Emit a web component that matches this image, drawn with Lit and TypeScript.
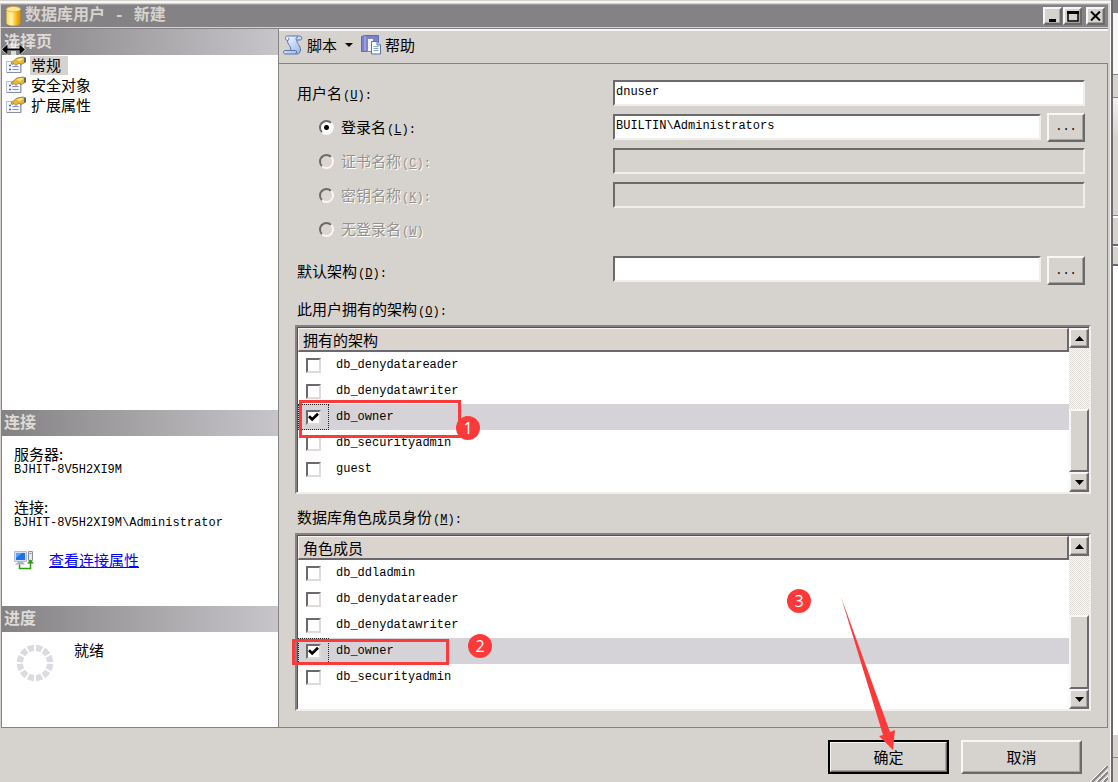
import { LitElement, html, css, svg, nothing } from "lit";
import { customElement, property, state } from "lit/decorators.js";
import { classMap } from "lit/directives/class-map.js";
import { styleMap } from "lit/directives/style-map.js";

const base = css`
  * {
    box-sizing: border-box;
  }
  button,
  input {
    font: inherit;
    color: inherit;
    margin: 0;
    border-radius: 0;
  }
  button {
    padding: 0;
    background: #d6d3ce;
    border: 2px solid;
    border-color: #f7f7f5 #6b696b #6b696b #f7f7f5;
    box-shadow: inset -1px -1px 0 #a5a29f;
  }
  svg {
    display: block;
    flex: none;
  }
`;

interface Row {
  name: string;
  checked?: boolean;
}

@customElement("check-list")
class CheckList extends LitElement {
  @property() heading = "";
  @property({ attribute: false }) rows: Row[] = [];
  @property({ type: Number }) thumb = 50;
  @state() private current = "db_owner";

  static styles = [
    base,
    css`
      :host {
        display: block;
      }
      .frame {
        height: 100%;
        display: flex;
        background: #fff;
        border: 2px solid;
        border-color: #848284 #f0efed #f0efed #848284;
        box-shadow: inset 1px 1px 0 #525052;
        padding: 1px 0 0 1px;
      }
      .area {
        flex: 1;
        min-width: 0;
      }
      table {
        width: 100%;
        border-collapse: separate;
        border-spacing: 0;
        table-layout: fixed;
      }
      .c1 {
        width: 31px;
      }
      th {
        height: 24px;
        padding: 0 4px;
        text-align: left;
        font-size: 15px;
        font-weight: 400;
        line-height: 20px;
        background: #dad3ce;
        border: 1px solid #f7f3ef;
        border-right: 2px solid #6b696b;
        border-bottom: 2px solid #6b696b;
      }
      td {
        height: 26px;
        padding: 0 7px;
        font: 12px/16px "Liberation Mono", "Noto Sans CJK SC", monospace;
      }
      .tick {
        padding: 0 0 0 7px;
        border: 1px solid transparent;
      }
      .current td {
        background: #d6d3d8;
      }
      .current .tick {
        border: 1px dotted #222;
      }
      input {
        appearance: none;
        display: block;
        width: 15px;
        height: 15px;
        background: #fff;
        border: 2px solid;
        border-color: #6b696b #e0dad6 #e0dad6 #6b696b;
      }
      input:checked {
        background: #fff
          url("data:image/svg+xml,%3Csvg xmlns='http://www.w3.org/2000/svg' viewBox='0 0 11 11'%3E%3Cpath d='M1 4.200 4.200 7.400 10 1.800' fill='none' stroke='%23000' stroke-width='2.800'/%3E%3C/svg%3E")
          center / 11px 11px no-repeat;
      }
      .bar {
        width: 20px;
        display: flex;
        flex-direction: column;
        background: repeating-conic-gradient(#dedbd6 0 25%, #fbfbfa 0 50%) 0 0 / 2px 2px;
      }
      .bar button {
        height: 20px;
        display: grid;
        place-items: center;
      }
      .track {
        flex: 1;
        display: flex;
        flex-direction: column;
        justify-content: flex-end;
      }
      .thumb {
        background: #d6d3ce;
        border: 2px solid;
        border-color: #f7f7f5 #6b696b #6b696b #f7f7f5;
      }
    `,
  ];

  render() {
    return html`<div class="frame">
      <div class="area">
        <table>
          <colgroup><col class="c1" /><col /></colgroup>
          <thead>
            <tr><th colspan="2">${this.heading}</th></tr>
          </thead>
          <tbody>
            ${this.rows.map(
              (r, i) => html`<tr
                class=${classMap({ current: r.name === this.current })}
                @click=${() => (this.current = r.name)}
              >
                <td class="tick"><input type="checkbox" id="r${i}" .checked=${!!r.checked} /></td>
                <td><label for="r${i}">${r.name}</label></td>
              </tr>`
            )}
          </tbody>
        </table>
      </div>
      <div class="bar">
        <button aria-label="向上滚动">
          <svg width="9" height="5"><path d="M4.5 0 9 5H0Z" /></svg>
        </button>
        <div class="track"><div class="thumb" style=${styleMap({ height: this.thumb + "%" })}></div></div>
        <button aria-label="向下滚动">
          <svg width="9" height="5"><path d="M0 0H9L4.5 5Z" /></svg>
        </button>
      </div>
    </div>`;
  }
}

const pageIcon = html`<svg width="20" height="18" viewBox="0 0 20 18">
  <path d="M.5 5.5h14v11H.5z" fill="#f4f6ff" stroke="#b8bed0" />
  <path d="M1 16.500h14v-9" fill="none" stroke="#8890a8" />
  <path d="M3 9.500h2M3 13.500h2" stroke="#4a62c8" stroke-width="1.500" />
  <path d="M6.500 10.500h6M6.500 13.500h6" stroke="#8090e0" />
  <path d="m5 7 6-5 6-1 2 1v4.500l-4 2-2.500-1.500L10 9.500 8 7.500 6 8.500Z" fill="#e8b830" stroke="#8c7434" stroke-width=".8" />
  <path d="m10.500 3.500 4.500-1.500 2.500 1-4 2.500Z" fill="#ffe680" />
  <path d="M18 1.500h2v5h-2z" fill="#4d6f72" />
</svg>`;

const scriptIcon = html`<svg width="20" height="20" viewBox="0 0 20 20">
  <defs>
    <linearGradient id="sc" x2="1" y2="1"><stop stop-color="#fff" /><stop offset="1" stop-color="#8fb0ea" /></linearGradient>
  </defs>
  <path
    d="M4 1h12.500c3 0 3 4 .5 4h-3c-1 3 4 6 3.500 10-.3 2.500-1.500 4-3.500 4H2c-2 0-2-3.500 0-3.500h5.500C9 12 4 9 4.500 5.500 2 5.500 2 1 4 1Z"
    fill="url(#sc)" stroke="#5872a8" />
  <path d="M4.500 5.500c2 0 2-2.500.5-2.500M14 5c-1.500 0-1.500-3 1-3M7.500 15.500h5c1.500 0 1.500 3 0 3" fill="none" stroke="#5872a8" />
</svg>`;

const helpIcon = html`<svg width="20" height="20" viewBox="0 0 20 20">
  <path d="m.5 1.500 3-1h14v16H.5Z" fill="#7c80cc" stroke="#6468ac" />
  <path d="M4 1v15" stroke="#b8bce8" />
  <path d="M6.500 3.500h6v13h-6z" fill="#eef2ff" stroke="#7c88bc" />
  <path d="M10.500 6.500h5.500l3.500 3.500v9h-9z" fill="#fff" stroke="#5578a8" />
  <path d="M16 6.500V10h3.500" fill="#c8d8f0" stroke="#5578a8" />
  <path d="M12.500 11.500h5M12.500 13.500h5M12.500 15.500h5" stroke="#88a8d8" />
</svg>`;

const serverIcon = html`<svg width="20" height="20" viewBox="0 0 20 20">
  <path d="M.5 1.500h12v10H.5z" fill="#d8def0" stroke="#b4bcd4" />
  <path d="M2 3h9v7H2z" fill="#1c74e4" />
  <path d="M2 3h6L2 8Z" fill="#58a8fa" />
  <path d="M4 12h5l2 2.500H1Z" fill="#a8b0c0" />
  <path d="M14.500 1.500h4v9h-4z" fill="#e4e8f0" stroke="#8890a0" />
  <path d="M15.500 3.500h2" stroke="#8890a0" />
  <path d="M5.500 14.500v4h11V12" fill="none" stroke="#2c9c10" stroke-width="1.500" />
  <path d="m13 13.500 3.500-4 3.500 4Z" fill="#2c9c10" />
</svg>`;

const spinner = html`<svg width="38" height="38" viewBox="-19 -19 38 38">
  ${Array.from(
    { length: 12 },
    (_, i) => svg`<path d="M-3.700-17.900A18.300 18.300 0 0 1 3.700-17.900L2.300-11.800A12 12 0 0 0-2.300-11.800Z" fill="#dedbe0" transform="rotate(${i * 30 + 15})"/>`
  )}
</svg>`;

@customElement("app-root")
class AppRoot extends LitElement {
  @state() private page = "常规";

  private pages = ["常规", "安全对象", "扩展属性"];
  private schemas: Row[] = [
    { name: "db_denydatareader" },
    { name: "db_denydatawriter" },
    { name: "db_owner", checked: true },
    { name: "db_securityadmin" },
    { name: "guest" },
  ];
  private roles: Row[] = [
    { name: "db_ddladmin" },
    { name: "db_denydatareader" },
    { name: "db_denydatawriter" },
    { name: "db_owner", checked: true },
    { name: "db_securityadmin" },
  ];

  static styles = [
    base,
    css`
      :host {
        display: flex;
        min-height: 100vh;
        overflow: hidden;
        background: #fff;
        color: #000;
        font: 15px/20px "Noto Sans CJK SC", sans-serif;
      }
      .dialog {
        flex: 1;
        min-width: 0;
        display: flex;
        flex-direction: column;
        background: #d6d3ce;
        border-right: 2px solid #6b696b;
        padding: 4px 3px 0 1px;
        box-shadow: inset 0 1px 0 #d6d3ce, inset -1px 3px 0 #f7f7f5;
        position: relative;
      }
      .title {
        height: 23px;
        display: flex;
        align-items: center;
        gap: 2px;
        padding: 0 3px 0 5px;
        background: #848284;
        color: #d6d3ce;
        border-top: 1px solid #a09da0;
      }
      h1 {
        flex: 1;
        margin: 0 0 0 2px;
        font: 700 16px/20px "Liberation Mono", "Noto Sans CJK SC", monospace;
      }
      .title button {
        width: 19px;
        height: 18px;
        display: grid;
        place-items: center;
      }
      .title .close {
        margin-left: 2px;
      }
      .sys {
        display: flex;
        gap: 1px;
      }
      .body {
        flex: 1;
        display: flex;
        margin-top: 1px;
        border-top: 1px solid #848284;
        border-left: 1px solid #848284;
        border-bottom: 1px solid #848284;
      }
      .side {
        width: 276px;
        display: flex;
        flex-direction: column;
        background: #fff;
      }
      h2 {
        height: 26px;
        margin: 0;
        padding: 0 2px;
        font-size: 16px;
        line-height: 22px;
        font-weight: 700;
        color: #dedbd6;
        background: linear-gradient(90deg, #848284, #c8c5ca);
      }
      .pages {
        flex: 1;
        margin: 0;
        padding: 0 4px;
        list-style: none;
      }
      .pages button {
        height: 20px;
        display: flex;
        align-items: center;
        gap: 4px;
        background: none;
        border: 0;
        box-shadow: none;
      }
      .pages span {
        height: 19px;
        line-height: 18px;
        padding: 0 1px;
      }
      .pages .on span {
        background: #d6d3ce;
        padding-right: 7px;
      }
      .conn {
        height: 170px;
        padding: 10px 12px;
        line-height: 16px;
      }
      dl,
      dd {
        margin: 0;
      }
      dd {
        font: 12px/16px "Liberation Mono", "Noto Sans CJK SC", monospace;
        margin-bottom: 21px;
      }
      .conn a {
        display: flex;
        align-items: center;
        gap: 15px;
        height: 16px;
        color: #00f;
      }
      .prog {
        height: 95px;
        display: flex;
        gap: 20px;
        padding: 8px 14px;
      }
      .prog svg {
        margin-top: 4px;
      }
      .main {
        flex: 1;
        min-width: 0;
        display: flex;
        flex-direction: column;
        border-left: 1px solid #848284;
      }
      .tools {
        height: 34px;
        display: flex;
        align-items: center;
        padding: 0 4px 5px;
        border-top: 2px solid #f7f7f5;
      }
      .tools button {
        display: flex;
        align-items: center;
        gap: 4px;
        background: none;
        border: 0;
        box-shadow: none;
      }
      .tools .drop {
        padding: 8px;
      }
      .form {
        flex: 1;
        display: flex;
        flex-direction: column;
        padding: 12px 16px 16px;
        border-top: 1px solid #848284;
        border-right: 1px solid #848284;
      }
      .row {
        height: 34px;
        display: flex;
        align-items: center;
        gap: 6px;
        padding: 0 6px 0 2px;
      }
      .row.schema {
        height: 30px;
        margin-top: 10px;
        align-items: flex-start;
      }
      .schema label {
        align-self: center;
      }
      .cap {
        width: 310px;
        display: flex;
        align-items: center;
        gap: 7px;
      }
      .cap.sub {
        padding-left: 22px;
      }
      .key {
        font-family: "Liberation Mono", monospace;
        font-size: 12px;
        line-height: 16px;
        padding-left: 1px;
      }
      .off label {
        color: #94918e;
        text-shadow: 1px 1px 0 #fff;
      }
      .text {
        flex: 1;
        min-width: 0;
        height: 26px;
        padding: 0 1px 2px;
        font: 12px/16px "Liberation Mono", "Noto Sans CJK SC", monospace;
        background: #fff;
        border: 2px solid;
        border-color: #6b696b #f0efed #f0efed #6b696b;
        outline: none;
      }
      .text:disabled {
        background: #d6d3ce;
      }
      .more {
        width: 38px;
        height: 29px;
        font: 12px/16px "Liberation Mono", monospace;
      }
      .radio {
        appearance: none;
        width: 15px;
        height: 15px;
        border: 2px solid;
        border-color: #6b696b #f7f7f5 #f7f7f5 #6b696b;
        border-radius: 50%;
        background: #fff;
      }
      .radio:checked {
        background: radial-gradient(circle, #000 0 2px, #fff 3px);
      }
      .radio:disabled {
        background: #dcd5d0;
      }
      .group {
        height: 20px;
        margin: 13px 2px 6px;
      }
      .box {
        position: relative;
      }
      .box.schemas {
        height: 169px;
      }
      .box.roles {
        flex: 1;
        min-height: 178px;
      }
      .box check-list {
        height: 100%;
      }
      .foot {
        display: flex;
        justify-content: flex-end;
        gap: 12px;
        padding: 12px 26px 8px;
        position: relative;
      }
      .foot button {
        width: 121px;
        height: 34px;
      }
      .foot .ok {
        outline: 2px solid #000;
        outline-offset: -2px;
        border-width: 3px;
      }
      .okbox {
        position: relative;
      }
      .grip {
        position: absolute;
        right: 0;
        bottom: 0;
      }
      .mark {
        position: absolute;
        border: 3px solid #fd3a3a;
        pointer-events: none;
      }
      .m1 {
        left: 4px;
        top: 75px;
        width: 162px;
        height: 38px;
      }
      .m2 {
        left: -3px;
        top: 106px;
        width: 157px;
        height: 26px;
      }
      .badge {
        position: absolute;
        width: 24px;
        height: 24px;
        border-radius: 50%;
        background: #fd3a3a;
        color: #fff;
        font: 16px/24px "Open Sans", sans-serif;
        text-align: center;
        pointer-events: none;
      }
      .b1 {
        left: 161px;
        top: 91px;
      }
      .b2 {
        left: 173px;
        top: 101px;
      }
      .b3 {
        left: -41px;
        top: -151px;
      }
      .arrow {
        position: absolute;
        left: 11px;
        top: -143px;
        pointer-events: none;
      }
      .cursor {
        position: absolute;
        left: 1px;
        top: 43px;
      }
      .behind {
        width: 5px;
        display: flex;
        flex-direction: column;
      }
      .behind i {
        flex: none;
        border-bottom: 1px solid #848284;
        background: #d6d3ce;
      }
      .behind .p1 {
        height: 13px;
        background: #848284;
      }
      .behind .p2 {
        height: 62px;
        background: #f7f7f7;
      }
      .behind .p3 {
        height: 23px;
      }
      .behind .p4 {
        height: 118px;
        background: linear-gradient(#f5efed, #d6d3ce 40px);
      }
      .behind .p5 {
        height: 30px;
        border-top: 2px solid #fff;
        border-bottom: 2px solid #6b696b;
      }
      .behind .p6 {
        height: 20px;
        border-top: 1px solid #fff;
        border-bottom: 2px solid #6b696b;
      }
      .behind .gap {
        flex: 1;
        border: 0;
        background: #fff;
      }
      .behind .p7 {
        height: 23px;
      }
      .behind .p8 {
        height: 24px;
        border: 0;
      }
    `,
  ];

  private key(letter: string, colon = true) {
    return html`<span class="key">(<u>${letter}</u>)${colon ? ":" : ""}</span>`;
  }

  private radioRow(id: string, text: string, letter: string, opts: { on?: boolean; value?: string; field?: boolean }) {
    const { on = false, value = "", field = true } = opts;
    return html`<div class=${classMap({ row: true, off: !on })}>
      <div class="cap sub">
        <input class="radio" type="radio" name="kind" id=${id} ?checked=${on} ?disabled=${!on} />
        <label for=${id}>${text}${this.key(letter, field)}</label>
      </div>
      ${field
        ? html`<input class="text" type="text" aria-label=${text} .value=${value} ?disabled=${!on} />`
        : nothing}
      ${on ? html`<button class="more" aria-label="浏览登录名">...</button>` : nothing}
    </div>`;
  }

  render() {
    return html`
      <div class="dialog">
        <header class="title">
          <svg width="15" height="20" viewBox="0 0 15 20">
            <defs>
              <linearGradient id="cy"><stop stop-color="#ffd848" /><stop offset=".35" stop-color="#fff6b0" /><stop offset=".7" stop-color="#f8b820" /><stop offset="1" stop-color="#d88c00" /></linearGradient>
            </defs>
            <path d="M.500 3v14c0 3.500 14 3.500 14 0V3Z" fill="url(#cy)" />
            <ellipse cx="7.500" cy="3.200" rx="7" ry="2.700" fill="#ffe890" stroke="#e0a420" stroke-width=".7" />
          </svg>
          <h1>数据库用户 - 新建</h1>
          <div class="sys">
            <button aria-label="最小化"><svg width="11" height="11"><path d="M2 8h7v3H2z" /></svg></button>
            <button aria-label="最大化">
              <svg width="12" height="11"><path d="M1 1h10v9H1z" fill="none" stroke="#000" stroke-width="1.500" /><path d="M0 0h12v3H0z" /></svg>
            </button>
          </div>
          <button class="close" aria-label="关闭">
            <svg width="11" height="10"><path d="m1 .5 9 9M10 .5l-9 9" stroke="#000" stroke-width="2" /></svg>
          </button>
        </header>

        <div class="body">
          <aside class="side">
            <h2>选择页</h2>
            <ul class="pages">
              ${this.pages.map(
                (p) => html`<li>
                  <button class=${classMap({ on: p === this.page })} @click=${() => (this.page = p)}>
                    ${pageIcon}<span>${p}</span>
                  </button>
                </li>`
              )}
            </ul>
            <h2>连接</h2>
            <div class="conn">
              <dl>
                <dt>服务器:</dt>
                <dd>BJHIT-8V5H2XI9M</dd>
                <dt>连接:</dt>
                <dd>BJHIT-8V5H2XI9M\\Administrator</dd>
              </dl>
              <a href="#connection">${serverIcon}<span>查看连接属性</span></a>
            </div>
            <h2>进度</h2>
            <div class="prog">${spinner}<span>就绪</span></div>
          </aside>

          <main class="main">
            <div class="tools">
              <button>${scriptIcon}脚本</button>
              <button class="drop" aria-label="脚本选项"><svg width="8" height="4"><path d="M0 0h8L4 4Z" /></svg></button>
              <button>${helpIcon}帮助</button>
            </div>
            <div class="form">
              <div class="row">
                <label class="cap" for="user"><span>用户名${this.key("U")}</span></label>
                <input class="text" type="text" id="user" value="dnuser" />
              </div>
              ${this.radioRow("login", "登录名", "L", { on: true, value: "BUILTIN\\Administrators" })}
              ${this.radioRow("cert", "证书名称", "C", {})}
              ${this.radioRow("secret", "密钥名称", "K", {})}
              ${this.radioRow("none", "无登录名", "W", { field: false })}
              <div class="row schema">
                <label class="cap" for="schema"><span>默认架构${this.key("D")}</span></label>
                <input class="text" type="text" id="schema" />
                <button class="more" aria-label="浏览架构">...</button>
              </div>
              <div class="group">此用户拥有的架构${this.key("O")}</div>
              <div class="box schemas">
                <check-list heading="拥有的架构" .rows=${this.schemas} .thumb=${51}></check-list>
                <div class="mark m1"></div>
                <div class="badge b1">1</div>
              </div>
              <div class="group">数据库角色成员身份${this.key("M")}</div>
              <div class="box roles">
                <check-list heading="角色成员" .rows=${this.roles} .thumb=${56}></check-list>
                <div class="mark m2"></div>
                <div class="badge b2">2</div>
              </div>
            </div>
          </main>
        </div>

        <footer class="foot">
          <div class="okbox">
            <button class="ok">确定</button>
            <svg class="arrow" width="60" height="158" viewBox="0 0 60 158">
              <path d="M2 0 51 135 56 133 54 153 40 139 44 138Z" fill="#fd3a3a" />
            </svg>
            <div class="badge b3">3</div>
          </div>
          <button>取消</button>
          <svg class="grip" width="18" height="16">
            <path d="M2 16 18 0M8 16 18 6M14 16 18 12" stroke="#848284" stroke-width="2" />
            <path d="M0 16 16 0M6 16 18 4M12 16 18 10" stroke="#fff" />
          </svg>
        </footer>

        <svg class="cursor" width="25" height="13" viewBox="0 0 25 13">
          <path
            d="M0 6.500 7 .5V5H10V.500H15V5H18V.500L25 6.500 18 12.500V8H15V12.500H10V8H7V12.500Z"
            fill="#fff" opacity=".7" />
          <path d="M1 6.500 6.500 1.500V5.500H18.500V1.500L24 6.500 18.500 11.500V7.500H6.500V11.500Z" />
        </svg>
      </div>
      <div class="behind">
        <i class="p1"></i><i class="p2"></i><i class="p3"></i><i class="p4"></i><i class="p5"></i><i class="p6"></i
        ><i class="gap"></i><i class="p7"></i><i class="p8"></i>
      </div>
    `;
  }
}
